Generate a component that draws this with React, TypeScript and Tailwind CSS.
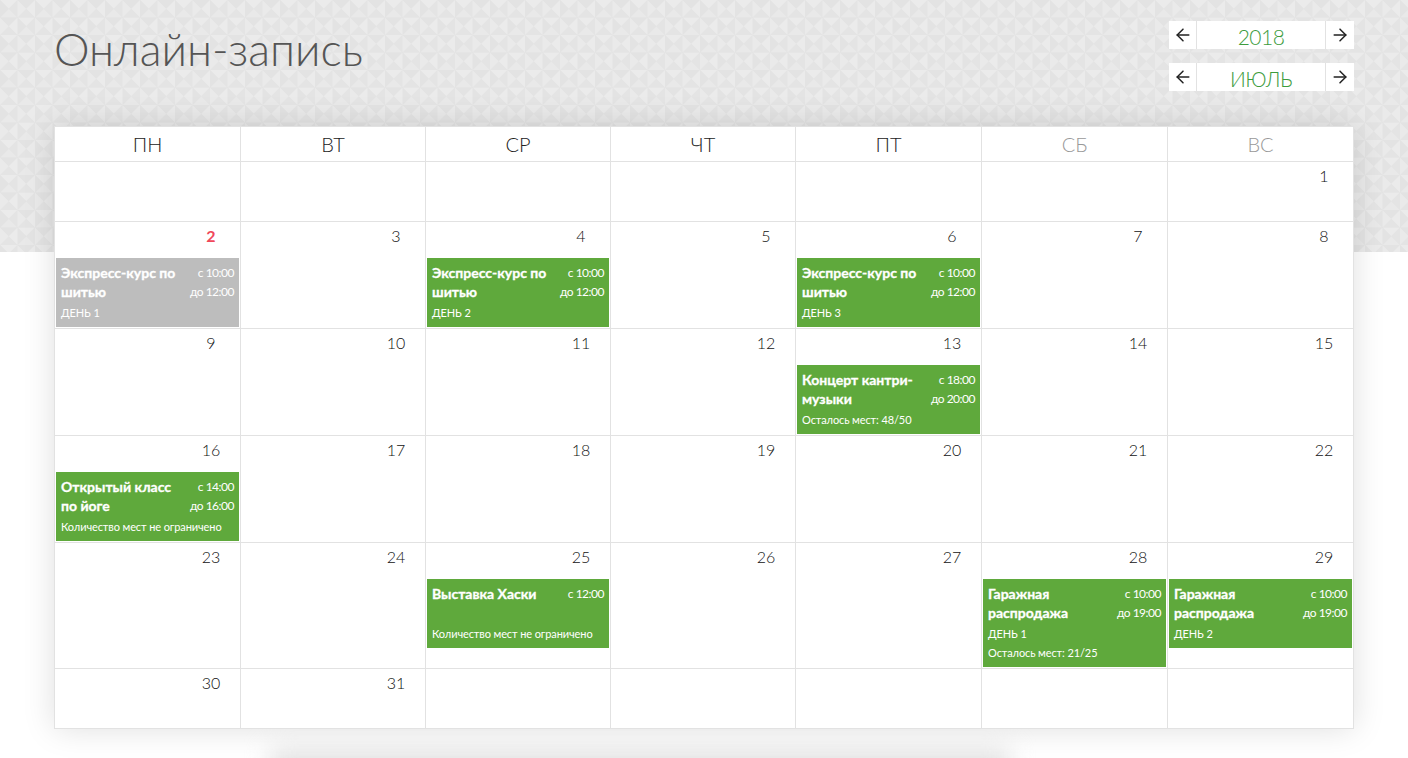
import { ArrowLeft, ArrowRight } from 'lucide-react';

type Event = {
  title: string;
  from: string;
  to?: string;
  day?: string;
  note?: string;
  past?: boolean;
};

const events: Record<number, Event> = {
  2: { title: 'Экспресс-курс по шитью', from: 'с 10:00', to: 'до 12:00', day: 'ДЕНЬ 1', past: true },
  4: { title: 'Экспресс-курс по шитью', from: 'с 10:00', to: 'до 12:00', day: 'ДЕНЬ 2' },
  6: { title: 'Экспресс-курс по шитью', from: 'с 10:00', to: 'до 12:00', day: 'ДЕНЬ 3' },
  13: { title: 'Концерт кантри-музыки', from: 'с 18:00', to: 'до 20:00', note: 'Осталось мест: 48/50' },
  16: { title: 'Открытый класс по йоге', from: 'с 14:00', to: 'до 16:00', note: 'Количество мест не ограничено' },
  25: { title: 'Выставка Хаски', from: 'с 12:00', note: 'Количество мест не ограничено' },
  28: { title: 'Гаражная распродажа', from: 'с 10:00', to: 'до 19:00', day: 'ДЕНЬ 1', note: 'Осталось мест: 21/25' },
  29: { title: 'Гаражная распродажа', from: 'с 10:00', to: 'до 19:00', day: 'ДЕНЬ 2' },
};

const weekdays = ['ПН', 'ВТ', 'СР', 'ЧТ', 'ПТ', 'СБ', 'ВС'];

const weeks: { days: (number | null)[]; height: string }[] = [
  { days: [null, null, null, null, null, null, 1], height: 'h-[60px]' },
  { days: [2, 3, 4, 5, 6, 7, 8], height: 'h-[107px]' },
  { days: [9, 10, 11, 12, 13, 14, 15], height: 'h-[107px]' },
  { days: [16, 17, 18, 19, 20, 21, 22], height: 'h-[107px]' },
  { days: [23, 24, 25, 26, 27, 28, 29], height: 'h-[126px]' },
  { days: [30, 31, null, null, null, null, null], height: 'h-[59px]' },
];

// texture of the header band
const Texture = () => (
  <svg className="block h-[252px] w-full" aria-hidden="true">
    <defs>
      <pattern id="pyramids" width="35" height="35" patternUnits="userSpaceOnUse">
        <rect width="35" height="35" fill="#e6e6e6" />
        <polygon points="0,0 17.5,0 8.75,8.75" fill="#ebebeb" />
        <polygon points="0,17.5 17.5,17.5 8.75,8.75" fill="#e9e9e9" />
        <polygon points="0,0 0,17.5 8.75,8.75" fill="#e3e3e3" />
        <polygon points="17.5,0 17.5,17.5 8.75,8.75" fill="#e4e4e4" />
        <polygon points="17.5,17.5 35,17.5 26.25,26.25" fill="#ebebeb" />
        <polygon points="17.5,35 35,35 26.25,26.25" fill="#e9e9e9" />
        <polygon points="17.5,17.5 17.5,35 26.25,26.25" fill="#e3e3e3" />
        <polygon points="35,17.5 35,35 26.25,26.25" fill="#e4e4e4" />
        <polygon points="17.5,0 35,0 26.25,8.75" fill="#e3e3e3" />
        <polygon points="17.5,17.5 35,17.5 26.25,8.75" fill="#e4e4e4" />
        <polygon points="17.5,0 17.5,17.5 26.25,8.75" fill="#eaeaea" />
        <polygon points="35,0 35,17.5 26.25,8.75" fill="#ebebeb" />
        <polygon points="0,17.5 17.5,17.5 8.75,26.25" fill="#e3e3e3" />
        <polygon points="0,35 17.5,35 8.75,26.25" fill="#e4e4e4" />
        <polygon points="0,17.5 0,35 8.75,26.25" fill="#eaeaea" />
        <polygon points="17.5,17.5 17.5,35 8.75,26.25" fill="#ebebeb" />
      </pattern>
    </defs>
    <rect width="100%" height="100%" fill="url(#pyramids)" />
  </svg>
);

const EventCard = ({ event }: { event: Event }) => (
  <div className={`mx-px px-[5px] pt-[5px] pb-[5px] text-white ${event.past ? 'bg-[#bdbdbd]' : 'bg-[#5fa93c]'}`}>
    <div className="flex justify-between">
      <div className="w-[125px] text-[14px] leading-[19px] font-bold [-webkit-text-stroke:0.3px_white]">
        {event.title}
      </div>
      <div className="text-right text-[12px] leading-[19px] tracking-[-0.5px] whitespace-nowrap">
        <div>{event.from}</div>
        {event.to && <div>{event.to}</div>}
      </div>
    </div>
    {!event.to && <div className="h-[19px]" />}
    <div className="mt-[2px] text-[11px] leading-[19px] tracking-[-0.1px]">
      {event.day && <div>{event.day}</div>}
      {event.note && <div>{event.note}</div>}
    </div>
  </div>
);

const Stepper = ({ value }: { value: string }) => (
  <div className="flex h-[28px] w-[185px] divide-x divide-[#e2e2e2] bg-white">
    <button className="flex w-[28px] items-center justify-center text-[#222]">
      <ArrowLeft size={20} strokeWidth={1.8} />
    </button>
    <div className="flex-1 pt-px text-center text-[21px] leading-[30px] tracking-[-0.5px] font-light text-[#3d9c3d]">
      {value}
    </div>
    <button className="flex w-[28px] items-center justify-center text-[#222]">
      <ArrowRight size={20} strokeWidth={1.8} />
    </button>
  </div>
);

export default function App() {
  return (
    <div className="relative h-[758px] overflow-hidden bg-white font-['Lato','Carlito','Open_Sans',sans-serif]">
      <Texture />
      <div className="absolute top-[750px] left-[270px] h-[60px] w-[740px] bg-[#e2e2e2] blur-[12px]" />
      <div className="absolute inset-x-[54px] top-0">
        <div className="flex h-[126px] justify-between">
          <h1 className="pt-[21px] text-[45px] leading-[56px] font-light text-[#555]">Онлайн-запись</h1>
          <div className="flex flex-col gap-[14px] pt-[21px]">
            <Stepper value="2018" />
            <Stepper value="ИЮЛЬ" />
          </div>
        </div>
        <div className="border border-[#e2e2e2] bg-white shadow-[0_0_30px_rgba(0,0,0,0.13)]">
          <div className="grid h-[35px] grid-cols-[186px_185px_185px_185px_186px_186px_185px] divide-x divide-[#e2e2e2] border-b border-[#e2e2e2]">
            {weekdays.map((name, i) => (
              <div
                key={name}
                className={`text-center text-[20px] leading-[34px] font-light ${i > 4 ? 'text-[#999]' : 'text-[#222]'}`}
              >
                {name}
              </div>
            ))}
          </div>
          {weeks.map((week, w) => (
            <div
              key={w}
              className={`grid grid-cols-[186px_185px_185px_185px_186px_186px_185px] divide-x divide-[#e2e2e2] ${week.height} ${w < weeks.length - 1 ? 'border-b border-[#e2e2e2]' : ''}`}
            >
              {week.days.map((day, d) => (
                <div key={d} className="min-w-0">
                  {day && (
                    <>
                      <div
                        className={`mr-[9px] ml-auto h-[36px] w-[40px] pt-[4px] text-center text-[16px] leading-[20px] ${day === 2 ? 'font-bold text-[#f0485a]' : 'font-light text-[#111]'}`}
                      >
                        {day}
                      </div>
                      {events[day] && <EventCard event={events[day]} />}
                    </>
                  )}
                </div>
              ))}
            </div>
          ))}
        </div>
      </div>
    </div>
  );
}
